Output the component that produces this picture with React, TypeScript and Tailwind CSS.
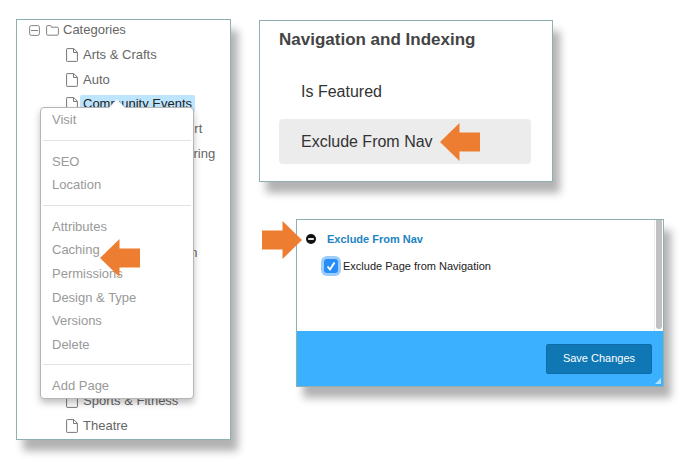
import { Fragment, type ReactNode } from "react";
import clsx from "clsx";

const menuGroups = [
  ["Visit"],
  ["SEO", "Location"],
  ["Attributes", "Caching", "Permissions", "Design & Type", "Versions", "Delete"],
  ["Add Page"],
];

const pages = [
  "Arts & Crafts",
  "Auto",
  "Community Events",
  "Education & Support",
  "Food, Drink & Catering",
  "Family",
  "Gardening",
  "Health",
  "Travel & Recreation",
  "Home",
  "Movies",
  "Music",
  "Pets",
  "Shopping",
  "Sports & Fitness",
  "Theatre",
];

function Panel({ className, children }: { className?: string; children: ReactNode }) {
  return (
    <section
      className={clsx(
        "relative border border-[#8fb0b3] bg-white shadow-[7px_11px_8px_rgba(0,0,0,0.3)]",
        className,
      )}
    >
      {children}
    </section>
  );
}

function Arrow({ className }: { className?: string }) {
  return (
    <svg viewBox="0 0 40 38" className={clsx("h-[38px] w-10 fill-[#ed7d31]", className)} aria-hidden="true">
      <path d="M0 19 19.500 0V9.500H40V28.500H19.500V38Z" />
    </svg>
  );
}

function CollapseIcon() {
  return (
    <svg viewBox="0 0 11 11" className="size-[11px] shrink-0 fill-none stroke-[#808080]" aria-hidden="true">
      <rect x="0.600" y="0.600" width="9.800" height="9.800" rx="1.800" />
      <path d="M2 5.500h7" />
    </svg>
  );
}

function FolderIcon() {
  return (
    <svg viewBox="0 0 13 11" className="h-[11px] w-[13px] shrink-0 fill-none stroke-[#808080]" aria-hidden="true">
      <path d="M.6 8.800V1.800Q.6.6 1.800.6H4.300Q5.400.6 5.400 1.800V2.200H11.200Q12.400 2.200 12.400 3.400V8.800Q12.400 10.200 11.200 10.200H1.800Q.6 10.200.6 8.800Z" />
    </svg>
  );
}

function FileIcon() {
  return (
    <svg viewBox="0 0 12 14" className="h-3.5 w-3 shrink-0 fill-none stroke-[#777]" aria-hidden="true">
      <path d="M1.200.6H7.800L11.400 4.200V12.800Q11.400 13.400 10.800 13.400H1.200Q.6 13.400.6 12.800V1.200Q.6.6 1.200.6Z" />
      <path d="M7.500.8V4.500H11.200" />
    </svg>
  );
}

function PageMenu() {
  return (
    <div
      role="menu"
      className="absolute top-[13px] left-[23px] z-10 flex h-[292px] w-[154px] flex-col justify-between rounded-[4px] border border-[#b5b5b5] bg-white pb-px shadow-[0_4px_7px_rgba(0,0,0,0.25)]"
    >
      <svg viewBox="0 0 18 10" className="absolute -top-[9px] left-[67px] h-2.5 w-[18px]" aria-hidden="true">
        <path d="M0 10 9 0 18 10Z" fill="#fff" />
        <path d="M0 9.500 9 .5 18 9.500" fill="none" stroke="#c8dde8" strokeWidth="0.600" />
      </svg>
      {menuGroups.map((group, i) => (
        <Fragment key={group[0]}>
          {i > 0 && <hr className="mx-0.5 my-2 border-[#e2e2e2]" />}
          {group.map((item) => (
            <div key={item} className="relative">
              <button
                type="button"
                role="menuitem"
                className="block h-[23px] w-full pl-[11px] text-left text-[13px] leading-[23px] text-[#999]"
              >
                {item}
              </button>
              {item === "Caching" && <Arrow className="absolute top-px left-[59px] z-10" />}
            </div>
          ))}
        </Fragment>
      ))}
    </div>
  );
}

function PageTree() {
  return (
    <Panel className="flex w-[215px] shrink-0 flex-col">
      <ul className="flex flex-1 flex-col justify-between pb-[3px] text-[13px] leading-5 text-[#666]">
        <li className="flex h-5 items-center pl-3">
          <CollapseIcon />
          <span className="ml-1.5 flex items-center gap-1">
            <FolderIcon />
            Categories
          </span>
        </li>
        {pages.map((page) => {
          const active = page === "Community Events";
          return (
            <li key={page} className="relative flex h-5 items-center gap-0.5 pl-[49px]">
              <FileIcon />
              <a
                href="#"
                className={clsx("rounded-[2px] px-[3px] leading-[18px]", active && "bg-[#bde6fe] text-[#222]")}
              >
                {page}
              </a>
              {active && <PageMenu />}
            </li>
          );
        })}
      </ul>
    </Panel>
  );
}

function AttributeList() {
  return (
    <Panel className="w-[294px] max-w-full pt-[7px] pr-[21px] pb-[17px] pl-[19px]">
      <h2 className="text-[17px] leading-6 font-bold text-[#444]">Navigation and Indexing</h2>
      <ul className="mt-[17px] text-base text-[#333]">
        <li className="flex h-[45px] items-center pl-[22px]">Is Featured</li>
        <li className="mt-[5px] flex h-[45px] items-center rounded-[4px] bg-[#ececec] pl-[22px]">
          Exclude From Nav
          <Arrow className="ml-[7px]" />
        </li>
      </ul>
    </Panel>
  );
}

function AttributeForm() {
  return (
    <Panel className="ml-[37px]">
      <Arrow className="absolute top-px -left-[35px] rotate-180" />
      <div className="flex h-[111px]">
        <div className="flex-1 pt-[9px] pl-[9px]">
          <div className="flex h-5 items-center gap-[11px]">
            <svg viewBox="0 0 10 10" className="size-2.5" aria-hidden="true">
              <circle cx="5" cy="5" r="5" fill="#111" />
              <path d="M2.200 5h5.600" stroke="#fff" strokeWidth="1.800" />
            </svg>
            <h3 className="text-[11px] font-bold text-[#2284bf]">Exclude From Nav</h3>
          </div>
          <div className="mt-[7px] flex h-5 items-center pl-[18px]">
            <span className="relative flex">
              <input
                id="exclude"
                type="checkbox"
                defaultChecked
                className="size-3.5 appearance-none rounded-[3px] bg-[#278df8] ring-[3px] ring-[#9dccfb]"
              />
              <svg
                viewBox="0 0 14 14"
                className="pointer-events-none absolute inset-0 size-3.5 fill-none stroke-white"
                aria-hidden="true"
              >
                <path d="M3.500 7.500 6 10.500 10.500 3.500" strokeWidth="1.900" />
              </svg>
            </span>
            <label htmlFor="exclude" className="pl-[5px] text-[11px] text-[#222]">
              Exclude Page from Navigation
            </label>
          </div>
        </div>
        <div className="flex w-[9px] border-l border-[#ececec] pl-px">
          <div className="h-[109px] w-1.5 rounded-b-full bg-[#c1c1c1]" />
        </div>
      </div>
      <footer className="relative flex h-[55px] items-center justify-end bg-[#3ab0ff] pr-[11px]">
        <button
          type="button"
          className="h-[30px] w-[106px] rounded-[2px] border border-[#0e6ca8] bg-[#1077b5] text-[11px] text-white"
        >
          Save Changes
        </button>
        <svg viewBox="0 0 6 6" className="absolute right-0.5 bottom-0.5 size-1.5 fill-[#b5e0ff]" aria-hidden="true">
          <path d="M6 0V6H0Z" />
        </svg>
      </footer>
    </Panel>
  );
}

export default function App() {
  return (
    <main className="flex min-h-screen bg-white pt-[19px] pr-5 pb-[26px] pl-4 font-['Liberation_Sans',Arial,sans-serif]">
      <PageTree />
      <div className="ml-7 flex flex-1 flex-col gap-[37px] pt-px">
        <AttributeList />
        <AttributeForm />
      </div>
    </main>
  );
}
